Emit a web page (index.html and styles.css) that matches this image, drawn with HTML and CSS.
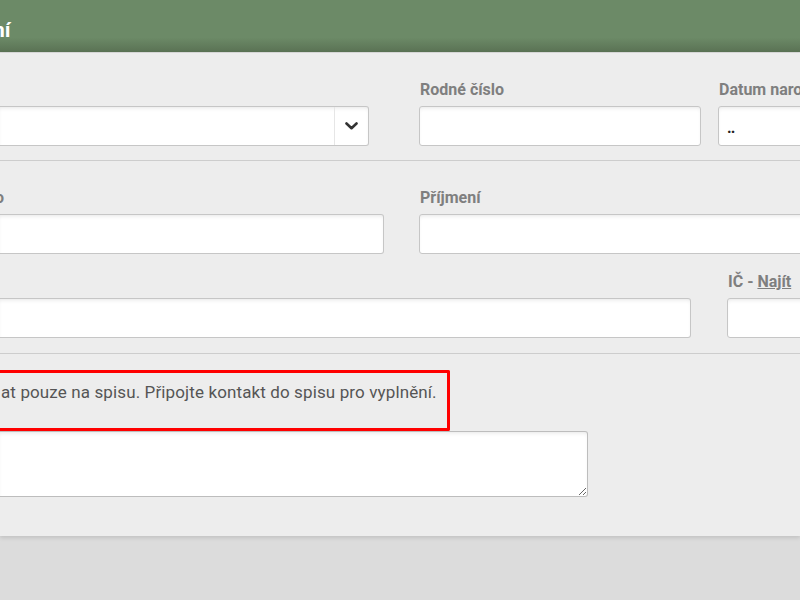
FILE: index.html
```html
<!DOCTYPE html>
<html lang="cs">
<head>
<meta charset="utf-8">
<title>Kontakt</title>
<link rel="stylesheet" href="styles.css">
</head>
<body>
<div class="header"><h1 class="title">ní</h1></div>
<div class="panel">
  <div class="section s1">
    <div class="row">
      <div class="field f-select">
        <label class="lbl">&nbsp;</label>
        <div class="select">
          <span class="select-value"></span>
          <span class="select-btn">
            <svg width="13" height="8" viewBox="0 0 13 8"><polyline points="1.5,1.5 6.5,6.2 11.5,1.5" fill="none" stroke="#333" stroke-width="2.6" stroke-linecap="round" stroke-linejoin="round"/></svg>
          </span>
        </div>
      </div>
      <div class="field f-rc">
        <label class="lbl">Rodné číslo</label>
        <div class="input"></div>
      </div>
      <div class="field f-dn">
        <label class="lbl">Datum narození</label>
        <div class="input date"><span class="dots">..</span></div>
      </div>
    </div>
  </div>
  <div class="section s2">
    <div class="row">
      <div class="field f-jm">
        <label class="lbl cut">o</label>
        <div class="input left-open"></div>
      </div>
      <div class="field f-pr">
        <label class="lbl">Příjmení</label>
        <div class="input"></div>
      </div>
    </div>
    <div class="row row3">
      <div class="field f-fi">
        <label class="lbl">&nbsp;</label>
        <div class="input left-open"></div>
      </div>
      <div class="field f-ic">
        <label class="lbl">IČ - <a class="find">Najít</a></label>
        <div class="input"></div>
      </div>
    </div>
  </div>
  <div class="section s3">
    <div class="notice">at pouze na spisu. Připojte kontakt do spisu pro vyplnění.</div>
    <textarea class="note"></textarea>
  </div>
</div>
</body>
</html>
```
FILE: styles.css
```css
html, body {
  margin: 0;
  padding: 0;
}
body {
  background: #dcdcdc;
  font-family: Roboto, "Noto Sans", sans-serif;
  overflow: hidden;
  width: 800px;
  height: 600px;
}
.header {
  height: 52px;
  background: linear-gradient(to bottom, #6c8a67 0%, #6c8a67 72%, #5a7254 100%);
  border-bottom: 1px solid #d9d9d9;
  overflow: hidden;
}
.title {
  margin: 0 0 0 -7px;
  padding-top: 17px;
  font-size: 21px;
  line-height: 26px;
  font-weight: 700;
  color: #fff;
}
.panel {
  background: #ededed;
  box-shadow: 0 2px 4px rgba(0, 0, 0, 0.12);
  padding-bottom: 39px;
}
.section {
  border-bottom: 1px solid #cdcdcd;
}
.s1 {
  padding: 27px 0 14px;
}
.s2 {
  padding: 27px 0 15px;
}
.s3 {
  border-bottom: 0;
  padding-top: 16px;
}
.row {
  display: flex;
  white-space: nowrap;
}
.row3 {
  margin-top: 18px;
}
.field {
  display: flex;
  flex-direction: column;
  flex: none;
}
.lbl {
  display: block;
  height: 20px;
  line-height: 20px;
  margin: 0 0 6px 1px;
  font-size: 16px;
  font-weight: 700;
  color: #7f7f7f;
}
.lbl.cut {
  margin-left: -5px;
}
.find {
  color: #7f7f7f;
  text-decoration: underline;
}
.input, .select {
  box-sizing: border-box;
  height: 40px;
  background: #fff;
  border: 1px solid #c6c6c6;
  border-radius: 3px;
  box-shadow: inset 0 3px 4px -2px rgba(0, 0, 0, 0.10);
}
.left-open, .select {
  border-left: 0;
  border-top-left-radius: 0;
  border-bottom-left-radius: 0;
}
.f-select { width: 369px; }
.f-rc { width: 282px; margin-left: 50px; }
.f-dn { width: 200px; margin-left: 17px; }
.f-jm { width: 384px; }
.f-pr { width: 500px; margin-left: 35px; }
.f-fi { width: 691px; }
.f-ic { width: 200px; margin-left: 36px; }
.select {
  display: flex;
}
.select-value {
  flex: 1;
}
.select-btn {
  width: 33px;
  border-left: 1px solid #e6e6e6;
  display: flex;
  align-items: center;
  justify-content: center;
}
.date {
  display: flex;
  align-items: center;
  padding-left: 8px;
}
.dots {
  font-size: 16px;
  color: #222;
  font-weight: 700;
  letter-spacing: -1px;
  line-height: 16px;
  padding-top: 4px;
}
.notice {
  box-sizing: border-box;
  width: 450px;
  height: 61px;
  border: 3px solid #ff0000;
  border-left: 0;
  border-radius: 0 2px 2px 0;
  padding: 9px 0 0 1px;
  font-size: 17px;
  letter-spacing: 0.12px;
  line-height: 20px;
  color: #555;
  white-space: nowrap;
}
.note {
  display: block;
  box-sizing: border-box;
  width: 588px;
  height: 66px;
  margin: 0;
  background: #fff;
  border: 1px solid #bdbdbd;
  border-left: 0;
  border-radius: 0 3px 3px 0;
  box-shadow: inset 0 3px 4px -2px rgba(0, 0, 0, 0.10);
  font-family: inherit;
  outline: none;
}
```
